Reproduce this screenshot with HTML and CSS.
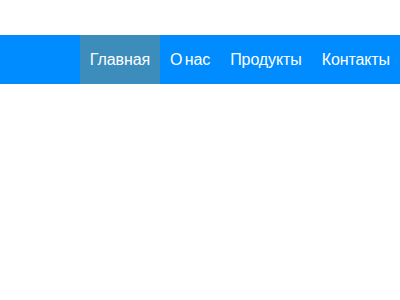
FILE: index.html
```html
<!DOCTYPE html>
<html lang="ru">
<head>
    <meta charset="UTF-8">
    <title>Меню</title>
    <link rel="stylesheet" href="styles.css">
</head>
<body>
    <nav class="menu">
        <ul class="menu-list">
            <li><a href="#" class="active">Главная</a></li>
            <li><a href="#">О нас</a></li>
            <li><a href="#">Продукты</a></li>
            <li><a href="#">Контакты</a></li>
        </ul>
    </nav>
</body>
</html>
```

FILE: styles.css
```css
body {
    margin: 0;
    padding-top: 35px;
    font-family: "Liberation Sans", Arial, sans-serif;
    background-color: #fff;
}
.menu {
    background-color: #008cff;
}
.menu-list {
    list-style: none;
    margin: 0;
    padding: 0;
    display: flex;
    justify-content: flex-end;
}
.menu-list a {
    display: block;
    padding: 0 10px;
    line-height: 49px;
    font-size: 16px;
    letter-spacing: -0.1px;
    word-spacing: -2px;
    color: #fff;
    text-decoration: none;
}
.menu-list a.active {
    background-color: #3c8dbc;
}
```
